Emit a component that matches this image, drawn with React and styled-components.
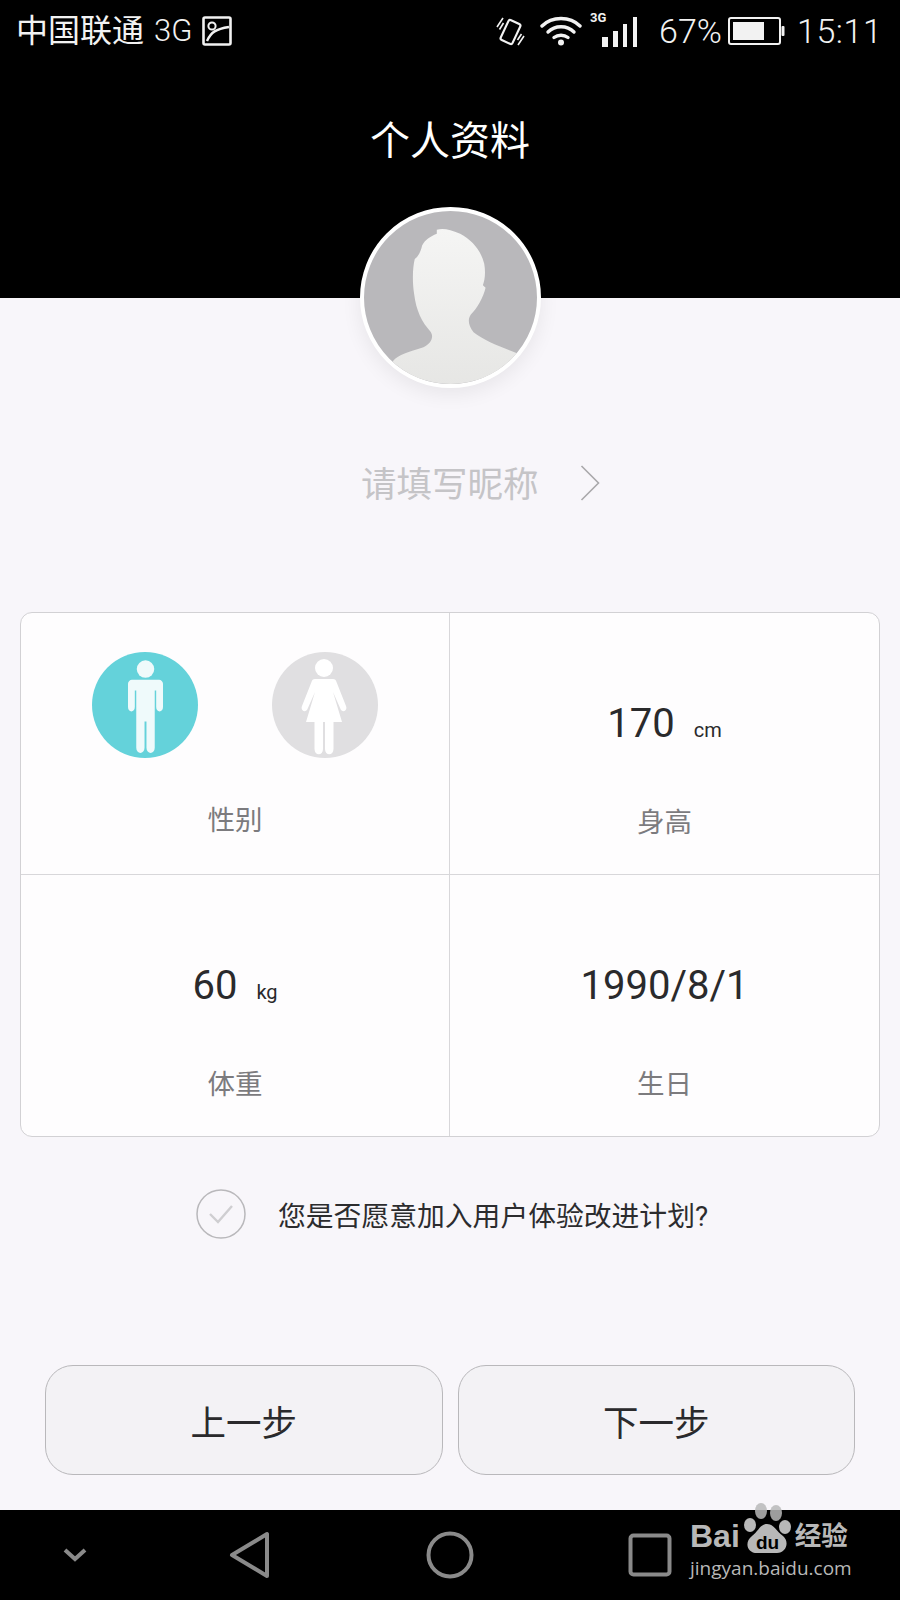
import React from 'react';
import styled, { createGlobalStyle } from 'styled-components';

const GlobalStyle = createGlobalStyle`
  html, body {
    margin: 0;
    padding: 0;
    background: #f8f6fa;
  }
  * {
    box-sizing: border-box;
  }
`;

const Page = styled.div`
  position: relative;
  width: 900px;
  height: 1600px;
  overflow: hidden;
  display: flex;
  flex-direction: column;
  background: #f8f6fa;
  font-family: Roboto, 'Noto Sans CJK SC', sans-serif;
`;

const Header = styled.header`
  height: 298px;
  background: #000;
  color: #fff;
  display: flex;
  flex-direction: column;
  flex-shrink: 0;
`;

const StatusBar = styled.div`
  height: 62px;
  display: flex;
  align-items: center;
  justify-content: space-between;
  padding: 0 17.5px 0 16px;
  color: #f2f2f2;
`;

const StatusGroup = styled.div`
  display: flex;
  align-items: center;
`;

const Carrier = styled.span`
  font-size: 32px;
  line-height: 40px;
  font-weight: 400;
`;

const NetworkLabel = styled.span`
  font-size: 31px;
  line-height: 40px;
  font-weight: 300;
  margin: 0 10px 0 10px;
`;

const StatusText = styled.span`
  font-size: 34px;
  line-height: 40px;
  font-weight: 300;
  letter-spacing: ${(p) => p.$spacing || '0'};
  margin: ${(p) => p.$margin || '0'};
`;

const StatusIcon = styled.svg`
  display: block;
  flex-shrink: 0;
  margin: ${(p) => p.$margin || '0'};
`;

const Title = styled.h1`
  margin: 58px 0 0;
  font-size: 40px;
  line-height: 44px;
  font-weight: 400;
  text-align: center;
`;

const AvatarFrame = styled.div`
  width: 181px;
  height: 181px;
  margin: -91px auto 0;
  border-radius: 50%;
  border: 4px solid #fff;
  background: #b9b8bb;
  overflow: hidden;
  flex-shrink: 0;
  box-shadow: 0 6px 20px rgba(0, 0, 0, 0.07);
  z-index: 1;
`;

const Nickname = styled.div`
  display: flex;
  align-items: center;
  height: 40px;
  margin-top: 77px;
  padding-left: 361px;
  gap: 41px;
`;

const NicknameText = styled.span`
  font-size: 35.5px;
  line-height: 40px;
  color: #c5c4c7;
`;

const ChevronIcon = styled.svg`
  display: block;
  margin-top: -4px;
`;

const Card = styled.section`
  display: grid;
  grid-template-columns: 428px 1fr;
  grid-template-rows: 261px 1fr;
  width: 860px;
  height: 525px;
  margin: 107px 0 0 20px;
  background: #fefdfe;
  border: 1px solid #d2d1d4;
  border-radius: 12px;
  flex-shrink: 0;
`;

const Cell = styled.div`
  display: flex;
  flex-direction: column;
  align-items: center;
  border-left: ${(p) => (p.$right ? '1px solid #d8d7da' : 'none')};
  border-top: ${(p) => (p.$bottom ? '1px solid #d8d7da' : 'none')};
`;

const Value = styled.div`
  display: flex;
  align-items: baseline;
  gap: 19px;
  height: 50px;
  margin-top: 85.5px;
  color: #2a2a2c;
  font-size: 40px;
  line-height: 50px;
`;

const Unit = styled.span`
  font-size: 20px;
  line-height: 20px;
`;

const Label = styled.div`
  margin-top: ${(p) => p.$top || '56.5px'};
  font-size: 27.5px;
  line-height: 36px;
  color: #7c7b7e;
`;

const GenderRow = styled.div`
  display: flex;
  gap: 74px;
  margin-top: 39px;
`;

const GenderBadge = styled.div`
  width: 106px;
  height: 106px;
  border-radius: 50%;
  background: ${(p) => p.$color};
  display: flex;
  align-items: center;
  justify-content: center;
  padding: 3px ${(p) => p.$nudge || '0'} 0 0;
`;

const ConsentRow = styled.div`
  display: flex;
  align-items: center;
  gap: 32px;
  height: 50px;
  margin-top: 52px;
  padding-left: 196px;
`;

const ConsentText = styled.span`
  padding-top: 6px;
  font-size: 27.8px;
  line-height: 40px;
  color: #2c2c2e;
`;

const Actions = styled.div`
  display: flex;
  gap: 15px;
  margin-top: 126px;
  padding: 0 45px;
`;

const ActionButton = styled.button`
  flex: 1;
  height: 110px;
  border: 1px solid #b9b8bb;
  border-radius: 28px;
  background: #f3f2f5;
  color: #2a2a2c;
  font-family: inherit;
  font-size: 35.5px;
`;

const NavBar = styled.nav`
  margin-top: auto;
  height: 90px;
  background: #000;
  display: grid;
  grid-template-columns: 150px repeat(3, 200px);
  align-items: center;
  justify-items: center;
  flex-shrink: 0;
`;

const Watermark = styled.div`
  position: absolute;
  left: 690px;
  top: 1503px;
  width: 170px;
  color: #b8b8b8;
`;

const WatermarkTop = styled.div`
  display: flex;
  align-items: flex-end;
  height: 51px;
`;

const WatermarkBrand = styled.span`
  font-family: 'Liberation Sans', sans-serif;
  font-size: 32px;
  line-height: 36px;
  font-weight: 700;
`;

const WatermarkPaw = styled.svg`
  display: block;
  flex-shrink: 0;
  margin-left: 3px;
`;

const WatermarkName = styled.span`
  margin-left: 2px;
  font-size: 26.5px;
  line-height: 36px;
  font-weight: 700;
`;

const WatermarkUrl = styled.div`
  font-family: 'Open Sans', sans-serif;
  font-size: 19px;
  line-height: 24px;
  margin-top: 2px;
`;

const ImageIcon = () => (
  <StatusIcon width="30" height="30" viewBox="0 0 30 30" fill="none" stroke="#f2f2f2" strokeWidth="2.6">
    <rect x="1.5" y="1.5" width="27" height="27" rx="1.5" />
    <circle cx="10" cy="10" r="3.6" strokeWidth="2" />
    <path d="M5 25 C 9 16, 14 13, 27 11" strokeWidth="2.4" />
  </StatusIcon>
);

const VibrateIcon = () => (
  <StatusIcon width="29" height="31" viewBox="0 0 29 31" fill="none" stroke="#f2f2f2" $margin="0 15px 0 0">
    <rect x="8" y="5" width="13" height="22" rx="2" strokeWidth="2.2" transform="rotate(25 14.5 16)" />
    <path d="M1 11 L7 2 M3.5 13.5 L7.5 7" strokeWidth="1.6" />
    <path d="M28 20 L22 29 M25.5 18 L21.5 24" strokeWidth="1.6" />
  </StatusIcon>
);

const WifiIcon = () => (
  <StatusIcon width="42" height="30" viewBox="0 0 42 30" fill="none" stroke="#f2f2f2" strokeWidth="3.4" strokeLinecap="round">
    <path d="M2 10 C 12 0, 30 0, 40 10" />
    <path d="M8 16 C 15 9, 27 9, 34 16" />
    <path d="M14 21.5 C 18 18.5, 24 18.5, 28 21.5" />
    <circle cx="21" cy="26.5" r="3" fill="#f2f2f2" stroke="none" />
  </StatusIcon>
);

const SignalIcon = () => (
  <StatusIcon width="48" height="36" viewBox="0 0 48 36" $margin="-4px 0 0 8px" fill="#f2f2f2">
    <text x="0" y="11" fontSize="13" fontWeight="700" fontFamily="Roboto, sans-serif">3G</text>
    <rect x="12" y="26" width="6" height="10" />
    <rect x="23" y="20" width="5" height="16" />
    <rect x="33" y="13" width="4" height="23" />
    <rect x="43" y="6" width="4" height="30" />
  </StatusIcon>
);

const BatteryIcon = () => (
  <StatusIcon width="57" height="28" viewBox="0 0 57 28" fill="none" $margin="0 12px 0 6px">
    <rect x="1" y="1" width="51" height="26" rx="2" stroke="#f2f2f2" strokeWidth="2" />
    <rect x="5" y="5" width="31" height="18" fill="#f2f2f2" />
    <rect x="53.5" y="9" width="3" height="10" rx="1" fill="#f2f2f2" />
  </StatusIcon>
);

const Chevron = () => (
  <ChevronIcon width="20" height="36" viewBox="0 0 20 36" fill="none" stroke="#a9a8ab" strokeWidth="1.6">
    <path d="M1.5 1 L18.5 18 L1.5 35" />
  </ChevronIcon>
);

const Silhouette = () => (
  <svg width="173" height="173" viewBox="72 62 518 518">
    <defs>
      <linearGradient id="bust" x1="0" y1="0" x2="0" y2="1">
        <stop offset="0" stopColor="#f5f5f4" />
        <stop offset="1" stopColor="#e5e5e3" />
      </linearGradient>
    </defs>
    <path
      fill="url(#bust)"
      d="M290 118 C 310 112 330 118 360 130 C 395 150 420 175 432 220 C 437 250 433 270 428 284 L 436 292 C 430 320 410 355 392 372 C 382 385 384 405 400 425 C 430 450 490 472 530 488 L 560 620 L 120 620 L 160 510 C 175 492 205 485 250 470 C 272 460 282 440 272 424 C 245 395 228 360 222 310 C 216 270 218 230 224 206 C 235 198 243 180 246 165 C 255 148 270 138 290 130 Z"
    />
  </svg>
);

const MaleFigure = () => (
  <svg width="35" height="96" viewBox="0 0 36 96" fill="#effafb">
    <circle cx="18" cy="9" r="9" />
    <path d="M4 20 H32 C34 20 36 22 36 24 V48 C36 54 29 54 29 48 V31 H27.5 V90 C27.5 97 19 97 19 90 V63 H17 V90 C17 97 8.5 97 8.5 90 V31 H7 V48 C7 54 0 54 0 48 V24 C0 22 2 20 4 20 Z" />
  </svg>
);

const FemaleFigure = () => (
  <svg width="46" height="96" viewBox="0 0 46 96" fill="#fff">
    <circle cx="23" cy="9" r="9" />
    <path d="M14 20 H32 C34 20 35 21 35.5 23 L45 47 C47 52 41 54 39.5 50 L32 33 L41 63 H32.5 V90 C32.5 97 24 97 24 90 V63 H22 V90 C22 97 13.5 97 13.5 90 V63 H5 L14 33 L6.5 50 C5 54 -1 52 1 47 L10.5 23 C11 21 12 20 14 20 Z" />
  </svg>
);

const CheckCircle = () => (
  <svg width="50" height="50" viewBox="0 0 50 50" fill="none">
    <circle cx="25" cy="25" r="24" stroke="#b9b8bb" strokeWidth="1.5" />
    <path d="M14 25 L22 33 L36 17" stroke="#cfced1" strokeWidth="2.4" />
  </svg>
);

const NavChevron = () => (
  <svg width="24" height="16" viewBox="0 0 24 16" fill="none" stroke="#8a8a8a" strokeWidth="4">
    <path d="M2 3 L12 12 L22 3" />
  </svg>
);

const NavBack = () => (
  <svg width="42" height="48" viewBox="0 0 42 48" fill="none" stroke="#8a8a8a" strokeWidth="4" strokeLinejoin="round">
    <path d="M38 3 V45 L3 24 Z" />
  </svg>
);

const NavHome = () => (
  <svg width="48" height="48" viewBox="0 0 48 48" fill="none" stroke="#8a8a8a" strokeWidth="4">
    <circle cx="24" cy="24" r="21.5" />
  </svg>
);

const NavRecent = () => (
  <svg width="44" height="44" viewBox="0 0 44 44" fill="none" stroke="#8a8a8a" strokeWidth="4">
    <rect x="2.5" y="2.5" width="39" height="39" rx="3" />
  </svg>
);

const BaiduPaw = () => (
  <WatermarkPaw width="50" height="51" viewBox="0 0 50 51" fill="#b8b8b8">
    <ellipse cx="18" cy="8" rx="6" ry="8" opacity="0.85" />
    <ellipse cx="33" cy="10" rx="6" ry="8" opacity="0.85" />
    <ellipse cx="7" cy="22" rx="6" ry="7" />
    <ellipse cx="42" cy="24" rx="6" ry="7" />
    <path d="M24 21 C 31 21 34 29 40 33 C 47 39 43 50 34 50 H 14 C 4 50 1 39 9 33 C 15 29 17 21 24 21 Z" />
    <text x="24.5" y="46" textAnchor="middle" fontSize="19" fontWeight="700" fontFamily="Liberation Sans, sans-serif" fill="#000">du</text>
  </WatermarkPaw>
);

export default function App() {
  return (
    <Page>
      <GlobalStyle />
      <Header>
        <StatusBar>
          <StatusGroup>
            <Carrier>中国联通</Carrier>
            <NetworkLabel>3G</NetworkLabel>
            <ImageIcon />
          </StatusGroup>
          <StatusGroup>
            <VibrateIcon />
            <WifiIcon />
            <SignalIcon />
            <StatusText $margin="0 0 0 21.5px">67%</StatusText>
            <BatteryIcon />
            <StatusText $spacing="0.6px">15:11</StatusText>
          </StatusGroup>
        </StatusBar>
        <Title>个人资料</Title>
      </Header>

      <AvatarFrame>
        <Silhouette />
      </AvatarFrame>

      <Nickname>
        <NicknameText>请填写昵称</NicknameText>
        <Chevron />
      </Nickname>

      <Card>
        <Cell>
          <GenderRow>
            <GenderBadge $color="#64d2da">
              <MaleFigure />
            </GenderBadge>
            <GenderBadge $color="#e0dfe1" $nudge="3px">
              <FemaleFigure />
            </GenderBadge>
          </GenderRow>
          <Label $top="45px">性别</Label>
        </Cell>
        <Cell $right>
          <Value>
            170 <Unit>cm</Unit>
          </Value>
          <Label>身高</Label>
        </Cell>
        <Cell $bottom>
          <Value>
            60 <Unit>kg</Unit>
          </Value>
          <Label>体重</Label>
        </Cell>
        <Cell $right $bottom>
          <Value>1990/8/1</Value>
          <Label>生日</Label>
        </Cell>
      </Card>

      <ConsentRow>
        <CheckCircle />
        <ConsentText>您是否愿意加入用户体验改进计划?</ConsentText>
      </ConsentRow>

      <Actions>
        <ActionButton>上一步</ActionButton>
        <ActionButton>下一步</ActionButton>
      </Actions>

      <NavBar>
        <NavChevron />
        <NavBack />
        <NavHome />
        <NavRecent />
      </NavBar>

      <Watermark>
        <WatermarkTop>
          <WatermarkBrand>Bai</WatermarkBrand>
          <BaiduPaw />
          <WatermarkName>经验</WatermarkName>
        </WatermarkTop>
        <WatermarkUrl>jingyan.baidu.com</WatermarkUrl>
      </Watermark>
    </Page>
  );
}
